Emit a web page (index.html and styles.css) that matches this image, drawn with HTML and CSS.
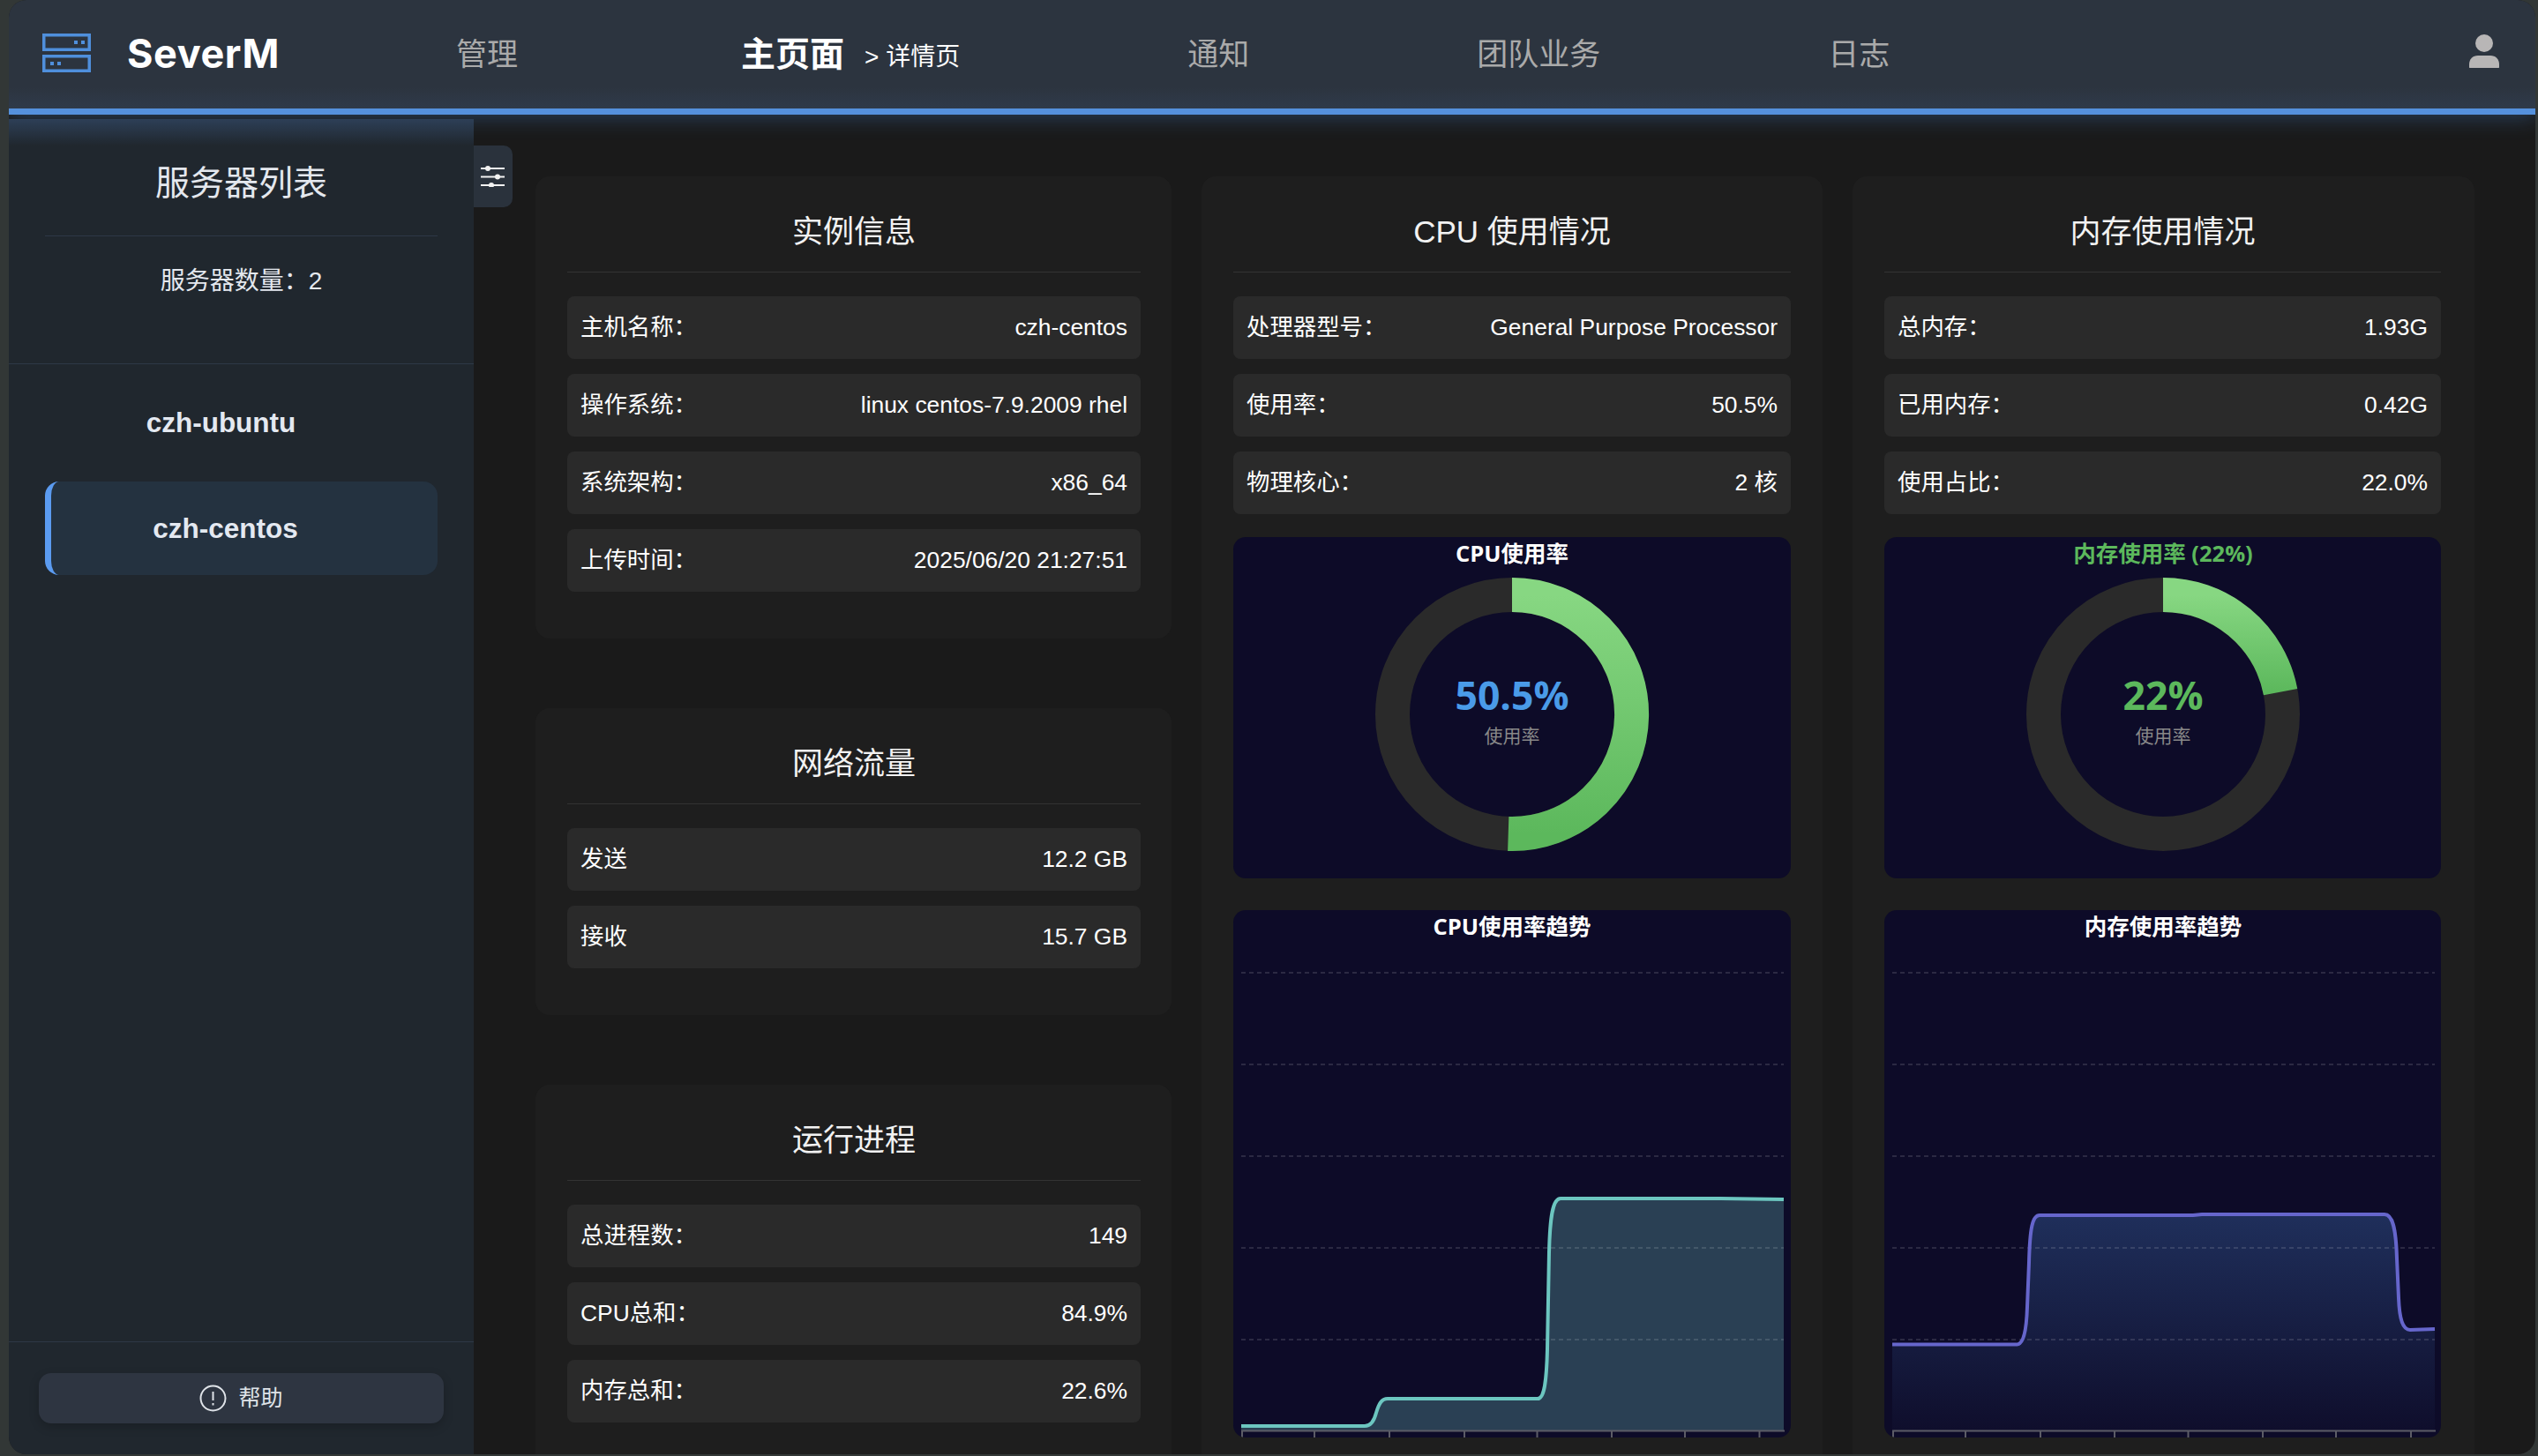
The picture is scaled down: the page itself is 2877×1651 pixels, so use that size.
FILE: index.html
```html
<!DOCTYPE html>
<html lang="zh-CN">
<head>
  <meta charset="UTF-8" />
  <meta name="viewport" content="width=device-width, initial-scale=1.0"/>
  <title>SeverM</title>
  <link rel="stylesheet" href="styles.css">
</head>
<body>
  <div class="app">
    <header class="topbar">
      <svg class="logo" width="55" height="44" viewBox="0 0 55 44">
        <rect x="1.750" y="1.750" width="51.500" height="16.500" fill="none" stroke="#4f8fdc" stroke-width="3.500"/>
        <rect x="1.750" y="25.750" width="51.500" height="16.500" fill="none" stroke="#4f8fdc" stroke-width="3.500"/>
        <rect x="36" y="8" width="4" height="4" fill="#4f8fdc"/>
        <rect x="44" y="8" width="4" height="4" fill="#4f8fdc"/>
        <rect x="9" y="32" width="4" height="4" fill="#4f8fdc"/>
        <rect x="17" y="32" width="4" height="4" fill="#4f8fdc"/>
      </svg>
      <div class="brand">SeverM</div>
      <nav class="nav">
        <a class="nav-item">管理</a>
        <div class="nav-current">
          <a class="nav-item active">主页面</a>
          <span class="crumb">&gt; 详情页</span>
        </div>
        <a class="nav-item">通知</a>
        <a class="nav-item">团队业务</a>
        <a class="nav-item">日志</a>
      </nav>
      <svg class="user-icon" width="34" height="40" viewBox="0 0 34 40">
        <circle cx="17" cy="10" r="10" fill="#b8b6b6"/>
        <path d="M0 37V34C0 28 4 24 10 24H24C30 24 34 28 34 34V37C34 38 33.500 38 33 38H1C0.500 38 0 38 0 37Z" fill="#b8b6b6"/>
      </svg>
    </header>

    <div class="layout">
      <aside class="sidebar">
        <div class="side-head">
          <h2 class="side-title">服务器列表</h2>
          <p class="side-count">服务器数量：2</p>
        </div>
        <ul class="server-list">
          <li class="server">czh-ubuntu</li>
          <li class="server active">czh-centos</li>
        </ul>
        <div class="side-foot">
          <button class="help-btn">
            <svg width="31" height="31" viewBox="0 0 31 31" fill="none" stroke="#dfe3e8" stroke-width="2">
              <circle cx="15.500" cy="15.500" r="14"/>
              <path d="M15.500 8V18M15.500 21V23.500"/>
            </svg>
            <span class="help-text">帮助</span>
          </button>
        </div>
      </aside>

      <main class="main">
        <button class="toggle">
          <svg width="28" height="24" viewBox="0 0 28 24" stroke="#f2f2f2" fill="#f2f2f2" stroke-width="2">
            <path d="M0 3H27M0 12.500H27M0 22H27"/>
            <circle cx="8" cy="3" r="3" stroke="none"/>
            <circle cx="19" cy="12.500" r="3" stroke="none"/>
            <circle cx="12" cy="22" r="3" stroke="none"/>
          </svg>
        </button>

        <div class="grid">
          <div class="col">
            <section class="card">
              <h3 class="card-title">实例信息</h3>
              <div class="row"><span>主机名称：</span><span>czh-centos</span></div>
              <div class="row"><span>操作系统：</span><span>linux centos-7.9.2009 rhel</span></div>
              <div class="row"><span>系统架构：</span><span>x86_64</span></div>
              <div class="row"><span>上传时间：</span><span>2025/06/20 21:27:51</span></div>
            </section>
            <section class="card">
              <h3 class="card-title">网络流量</h3>
              <div class="row"><span>发送</span><span>12.2 GB</span></div>
              <div class="row"><span>接收</span><span>15.7 GB</span></div>
            </section>
            <section class="card">
              <h3 class="card-title">运行进程</h3>
              <div class="row"><span>总进程数：</span><span>149</span></div>
              <div class="row"><span>CPU总和：</span><span>84.9%</span></div>
              <div class="row"><span>内存总和：</span><span>22.6%</span></div>
            </section>
          </div>

          <section class="card">
            <h3 class="card-title">CPU 使用情况</h3>
            <div class="row"><span>处理器型号：</span><span>General Purpose Processor</span></div>
            <div class="row"><span>使用率：</span><span>50.5%</span></div>
            <div class="row"><span>物理核心：</span><span>2 核</span></div>

            <div class="panel panel-gauge">
              <svg viewBox="0 0 632 387">
                <defs>
                  <linearGradient id="ringCpu" x1="0" y1="0" x2="0" y2="1">
                    <stop offset="0" stop-color="#87d782"/>
                    <stop offset="1" stop-color="#5cb85c"/>
                  </linearGradient>
                </defs>
                <text class="chart-title" x="316" y="28">CPU使用率</text>
                <circle cx="316" cy="201" r="135.500" fill="none" stroke="#2a2a2a" stroke-width="39"/>
                <path d="M316 65.500A135.500 135.500 0 1 1 311.740 336.430" fill="none" stroke="url(#ringCpu)" stroke-width="39"/>
                <text class="gauge-num blue" x="316" y="196">50.5%</text>
                <text class="gauge-sub" x="316" y="233">使用率</text>
              </svg>
            </div>

            <div class="panel panel-trend">
              <svg viewBox="0 0 632 598">
                <text class="chart-title" x="316" y="28">CPU使用率趋势</text>
                <path class="area-cpu" d="M9 585H149C157 585 160 578 162 570C165 560 168 554 175 554H345C352 554 355 538 356 498L358 388C359 348 362 327 371 327H552L624 328V590H9Z"/>
                <path class="grid-line" d="M9 71H624M9 175H624M9 279H624M9 383H624M9 487H624"/>
                <path class="axis" d="M9 590.500H625M10 590V598M92 590V598M177 590V598M262 590V598M344.500 590V598M429 590V598M512 590V598M596.500 590V598"/>
                <path class="line-cpu" d="M9 585H149C157 585 160 578 162 570C165 560 168 554 175 554H345C352 554 355 538 356 498L358 388C359 348 362 327 371 327H552L624 328"/>
              </svg>
            </div>
          </section>

          <section class="card card-last">
            <h3 class="card-title">内存使用情况</h3>
            <div class="row"><span>总内存：</span><span>1.93G</span></div>
            <div class="row"><span>已用内存：</span><span>0.42G</span></div>
            <div class="row"><span>使用占比：</span><span>22.0%</span></div>

            <div class="panel panel-gauge">
              <svg viewBox="0 0 631 387">
                <defs>
                  <linearGradient id="ringMem" x1="0" y1="0" x2="0" y2="1">
                    <stop offset="0" stop-color="#87d782"/>
                    <stop offset="1" stop-color="#5cb85c"/>
                  </linearGradient>
                </defs>
                <text class="chart-title green" x="316" y="28">内存使用率 (22%)</text>
                <circle cx="316" cy="201" r="135.500" fill="none" stroke="#2a2a2a" stroke-width="39"/>
                <path d="M316 65.500A135.500 135.500 0 0 1 449.100 175.600" fill="none" stroke="url(#ringMem)" stroke-width="39"/>
                <text class="gauge-num green" x="316" y="196">22%</text>
                <text class="gauge-sub" x="316" y="233">使用率</text>
              </svg>
            </div>

            <div class="panel panel-trend">
              <svg viewBox="0 0 631 598">
                <defs>
                  <linearGradient id="fillMem" x1="0" y1="0" x2="0" y2="1">
                    <stop offset="0" stop-color="#1f2f5b"/>
                    <stop offset="1" stop-color="#0f0e2c"/>
                  </linearGradient>
                </defs>
                <text class="chart-title" x="316" y="28">内存使用率趋势</text>
                <path fill="url(#fillMem)" d="M9 492.500H150C157 492.500 161 480 162 450L164 400C165 360 168 346 176 346H350L360 345H567C576 345 580 360 581 395L583 440C584 465 588 476 596 476L624 475V590H9Z"/>
                <path class="grid-line" d="M9 71H624M9 175H624M9 279H624M9 383H624M9 487H624"/>
                <path class="axis" d="M9 590.500H625M10 590V598M92 590V598M177 590V598M261 590V598M344.500 590V598M429 590V598M512 590V598M597 590V598"/>
                <path class="line-mem" d="M9 492.500H150C157 492.500 161 480 162 450L164 400C165 360 168 346 176 346H350L360 345H567C576 345 580 360 581 395L583 440C584 465 588 476 596 476L624 475"/>
              </svg>
            </div>
          </section>
        </div>
      </main>
    </div>
  </div>
</body>
</html>
```

FILE: styles.css
```css
* {
  box-sizing: border-box;
}

html, body {
  height: 100%;
}

body {
  margin: 0;
  background-color: #323736;
  font-family: "Liberation Sans", "Noto Sans CJK SC", sans-serif;
  overflow: hidden;
}

.app {
  width: 2864px;
  height: 1649px;
  margin-left: 10px;
  background-color: #1a1a1a;
  border-radius: 20px;
  overflow: hidden;
  display: flex;
  flex-direction: column;
}

/* top bar */
.topbar {
  position: relative;
  z-index: 2;
  flex: none;
  height: 130px;
  padding: 0 41px 3px 38px;
  display: flex;
  align-items: center;
  background: linear-gradient(#2c343f 80%, #2f3a4a);
  border-bottom: 7px solid #5591dd;
  box-shadow: 0 4px 22px rgba(74, 144, 226, 0.3);
}

.logo {
  flex: none;
}

.brand {
  margin-left: 41px;
  width: 171px;
  font-family: Inter, sans-serif;
  font-size: 45px;
  font-weight: 700;
  letter-spacing: 0.6px;
  color: #fff;
  white-space: nowrap;
}

.nav {
  margin-left: 202px;
  margin-bottom: 4px;
  display: flex;
  align-items: center;
  gap: 258px;
}

.nav-item {
  font-size: 35px;
  color: #aaa;
  white-space: nowrap;
}

.nav-item.active {
  font-size: 39px;
  font-weight: 700;
  color: #fff;
}

.nav-current {
  margin-left: -5px;
  display: flex;
  align-items: center;
  gap: 23px;
}

.crumb {
  margin-top: 8px;
  font-size: 28px;
  color: #fff;
  white-space: nowrap;
}

.user-icon {
  margin-left: auto;
  margin-bottom: 2px;
  flex: none;
}

/* sidebar */
.layout {
  flex: 1;
  min-height: 0;
  display: flex;
}

.sidebar {
  position: relative;
  z-index: 3;
  flex: none;
  width: 527px;
  margin-top: 5px;
  display: flex;
  flex-direction: column;
  background: linear-gradient(#2d3f57, #20272e 30px);
}

.side-head {
  height: 278px;
  padding: 0 41px;
  border-bottom: 1px solid #2e3846;
  text-align: center;
}

.side-title {
  margin: 0;
  padding: 47px 0 33px;
  font-size: 39px;
  line-height: 52px;
  font-weight: 400;
  color: #e4e8ee;
  border-bottom: 1px solid #2e3846;
}

.side-count {
  margin: 33px 0 0;
  font-size: 28px;
  line-height: 36px;
  color: #e4e8ee;
}

.server-list {
  list-style: none;
  margin: 13px 0 0;
  padding: 0 41px;
  display: flex;
  flex-direction: column;
  gap: 14px;
}

.server {
  height: 106px;
  padding: 1px 46px 0 0;
  display: flex;
  align-items: center;
  justify-content: center;
  border-radius: 16px;
  font-size: 31.500px;
  font-weight: 700;
  color: #e4e9f1;
}

.server.active {
  padding-right: 43px;
  background-color: #243240;
  border-left: 7px solid #5b9bf0;
}

.side-foot {
  margin-top: auto;
  padding: 35px 34px;
  border-top: 1px solid #2e3846;
}

.help-btn {
  width: 100%;
  height: 57px;
  display: flex;
  align-items: center;
  justify-content: center;
  gap: 13px;
  padding: 0;
  border: none;
  border-radius: 14px;
  background-color: #2e3541;
  box-shadow: 0 4px 12px rgba(0, 0, 0, 0.2);
  font-family: inherit;
  font-size: 25px;
  color: #dfe3e8;
}

.help-text {
  margin-bottom: 5px;
}

/* main area */
.main {
  position: relative;
  flex: 1;
  min-width: 0;
  padding: 70px 0 0 70px;
  overflow: hidden;
}

.toggle {
  position: absolute;
  left: 0;
  top: 35px;
  width: 44px;
  height: 70px;
  padding: 0;
  display: flex;
  align-items: center;
  justify-content: center;
  border: none;
  border-radius: 0 10px 10px 0;
  background-color: #2a323c;
}

.grid {
  display: grid;
  grid-template-columns: 721px 704px 705px;
  gap: 34px;
  align-items: start;
}

.col {
  display: flex;
  flex-direction: column;
  gap: 79px;
}

.card {
  padding: 36px;
  background-color: #1e1e1e;
  border-radius: 16px;
}

.col .card {
  padding-right: 35px;
}

.card-last {
  padding-right: 38px;
}

.card-title {
  margin: 0 0 27px;
  padding: 2px 0 20px;
  border-bottom: 1px solid #333;
  font-size: 35px;
  line-height: 50px;
  font-weight: 400;
  text-align: center;
  color: #f2f2f2;
}

.row {
  height: 71px;
  margin-bottom: 17px;
  padding: 0 15px;
  display: flex;
  align-items: baseline;
  justify-content: space-between;
  background-color: #2a2a2a;
  border-radius: 8px;
  font-size: 26.400px;
  line-height: 71px;
  color: #fff;
  white-space: nowrap;
}

.panel {
  background-color: #0d0b28;
  border-radius: 14px;
  overflow: hidden;
}

.panel svg {
  display: block;
  width: 100%;
  height: 100%;
}

.panel-gauge {
  height: 387px;
  margin-top: 26px;
}

.panel-trend {
  height: 598px;
  margin-top: 36px;
}

.chart-title {
  font-family: "Open Sans", "Noto Sans CJK SC", sans-serif;
  font-size: 25.500px;
  font-weight: 700;
  fill: #fff;
  text-anchor: middle;
}

.chart-title.green {
  fill: #5cb85c;
}

.gauge-num {
  font-family: "Open Sans", sans-serif;
  font-size: 44.500px;
  font-weight: 700;
  text-anchor: middle;
}

.gauge-num.blue {
  fill: #4a9be8;
}

.gauge-num.green {
  fill: #5cb85c;
}

.gauge-sub {
  font-size: 21px;
  fill: #888;
  text-anchor: middle;
}

.grid-line {
  fill: none;
  stroke: #fff;
  stroke-opacity: 0.25;
  stroke-width: 1;
  stroke-dasharray: 5 4;
}

.axis {
  fill: none;
  stroke: #5c5c66;
  stroke-width: 2;
}

.area-cpu {
  fill: #2a4054;
}

.line-cpu {
  fill: none;
  stroke: #6cc6c0;
  stroke-width: 4;
}

.line-mem {
  fill: none;
  stroke: #6666cc;
  stroke-width: 4;
}
```
